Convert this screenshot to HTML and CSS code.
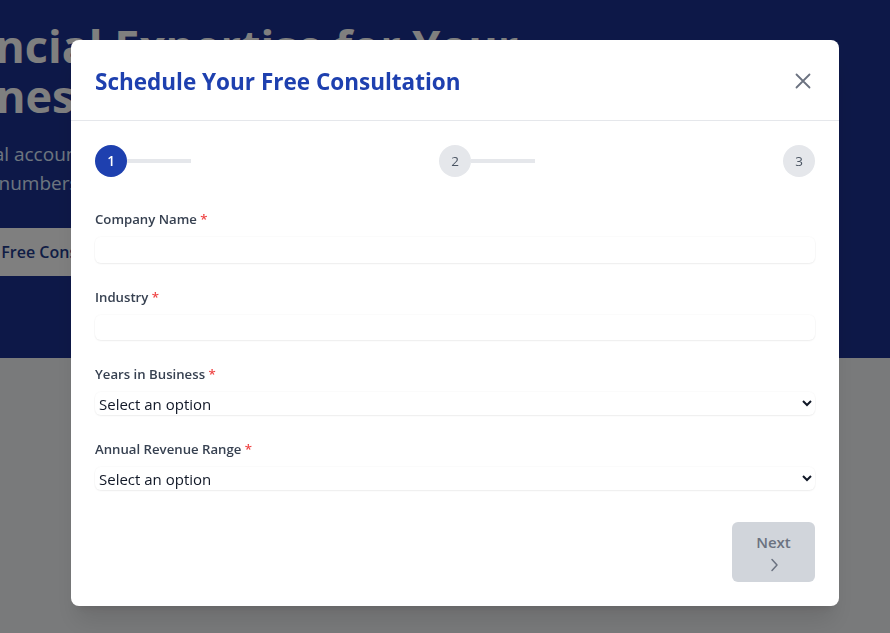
FILE: index.html
```html
<!DOCTYPE html>
<html lang="en">
<head>
<meta charset="utf-8">
<title>Schedule Your Free Consultation</title>
<link rel="stylesheet" href="styles.css">
</head>
<body>
<div class="page">
  <section class="hero">
    <div class="hero-inner">
      <h1 class="hero-title">Financial Expertise for Your<br>Business Success</h1>
      <p class="hero-text">Professional accounting and tax advisory for growing companies.<br>Make your numbers work harder for you.</p>
      <a class="hero-btn" href="#">Get Free Consultation</a>
    </div>
  </section>
  <section class="below"></section>
</div>

<div class="overlay">
  <div class="modal">
    <div class="modal-header">
      <h2 class="modal-title">Schedule Your Free Consultation</h2>
      <button class="close" aria-label="Close">
        <svg width="16" height="16" viewBox="0 0 16 16" fill="none" stroke="#6b7280" stroke-width="1.8" stroke-linecap="round"><path d="M1.5 1.5L14.5 14.5M14.5 1.5L1.5 14.5"/></svg>
      </button>
    </div>
    <div class="modal-body">
      <div class="stepper">
        <div class="step">
          <span class="dot active">1</span>
          <span class="bar"></span>
        </div>
        <div class="step">
          <span class="dot">2</span>
          <span class="bar"></span>
        </div>
        <div class="step">
          <span class="dot">3</span>
        </div>
      </div>

      <form class="form">
        <div class="field">
          <label class="label">Company Name <span class="req">*</span></label>
          <input class="input" type="text">
        </div>
        <div class="field">
          <label class="label">Industry <span class="req">*</span></label>
          <input class="input" type="text">
        </div>
        <div class="field">
          <label class="label">Years in Business <span class="req">*</span></label>
          <select class="select"><option>Select an option</option></select>
        </div>
        <div class="field">
          <label class="label">Annual Revenue Range <span class="req">*</span></label>
          <select class="select"><option>Select an option</option></select>
        </div>
        <div class="actions">
          <button type="button" class="next">
            <span>Next</span>
            <svg width="10" height="14" viewBox="0 0 10 14" fill="none" stroke="#6b7280" stroke-width="1.5" stroke-linecap="round" stroke-linejoin="round"><path d="M3 1.5L8 7L3 12.5"/></svg>
          </button>
        </div>
      </form>
    </div>
  </div>
</div>
</body>
</html>
```

FILE: styles.css
```css
* { box-sizing: border-box; }
html, body { margin: 0; padding: 0; }
body {
  font-family: "Open Sans", "Noto Sans", sans-serif;
  background: #f3f4f6;
  overflow: hidden;
  height: 633px;
}
.page { width: 890px; }
.hero {
  background: #1b3190;
  height: 358px;
  overflow: hidden;
  padding-top: 21px;
}
.hero-inner { margin-left: -100px; }
.hero-title {
  margin: 0;
  color: #ffffff;
  font-size: 45px;
  line-height: 50px;
  font-weight: 700;
  white-space: nowrap;
}
.hero-text {
  margin: 19px 0 0;
  color: #dbeafe;
  font-size: 19px;
  line-height: 29px;
  white-space: nowrap;
}
.hero-btn {
  display: inline-block;
  margin-top: 30px;
  background: #ffffff;
  color: #1e3a8a;
  font-size: 16px;
  font-weight: 600;
  line-height: 48px;
  padding: 0 32px 0 70px;
  text-decoration: none;
}
.below { height: 275px; background: #f3f4f6; }

.overlay {
  position: fixed;
  inset: 0;
  background: rgba(0, 0, 0, 0.5);
  padding: 40px 0 0 71px;
}
.modal {
  width: 768px;
  height: 566px;
  background: #ffffff;
  border-radius: 8px;
  box-shadow: 0 20px 25px -5px rgba(0,0,0,0.1), 0 8px 10px -6px rgba(0,0,0,0.1);
  overflow: hidden;
}
.modal-header {
  display: flex;
  align-items: center;
  justify-content: space-between;
  padding: 24px 24px 23px;
  border-bottom: 1px solid #e5e7eb;
  height: 81px;
}
.modal-title {
  margin: 0;
  color: #1e40af;
  font-size: 22.5px;
  font-weight: 700;
  line-height: 32px;
  padding-top: 2px;
}
.close {
  border: 0;
  background: none;
  padding: 0;
  width: 16px;
  height: 16px;
  margin-right: 4px;
  display: flex;
}
.modal-body { padding: 24px; }

.stepper {
  display: flex;
  justify-content: space-between;
  align-items: center;
  margin-bottom: 32px;
}
.step { display: flex; align-items: center; }
.dot {
  width: 32px;
  height: 32px;
  border-radius: 50%;
  background: #e5e7eb;
  color: #4b5563;
  font-size: 13.5px;
  font-weight: 500;
  display: flex;
  align-items: center;
  justify-content: center;
}
.dot.active { background: #1e40af; color: #ffffff; font-weight: 600; }
.bar {
  width: 64px;
  height: 4px;
  background: #e5e7eb;
}

.form { display: flex; flex-direction: column; gap: 24px; }
.field { display: flex; flex-direction: column; }
.label {
  color: #374151;
  font-size: 13.2px;
  font-weight: 600;
  line-height: 20px;
  margin-bottom: 8px;
}
.req { color: #ef4444; }
.input {
  height: 25.5px;
  border: 0;
  border-radius: 6px;
  background: #ffffff;
  box-shadow: 0 1px 2px 0 rgba(0,0,0,0.06), 0 0 0 1px rgba(0,0,0,0.015);
  font: inherit;
  padding: 1px 4px;
  outline: none;
}
.select {
  height: 23px;
  border: 0;
  border-radius: 6px;
  background: #ffffff;
  box-shadow: 0 1px 2px 0 rgba(0,0,0,0.06), 0 0 0 1px rgba(0,0,0,0.015);
  font-family: inherit;
  font-size: 15px;
  color: #111827;
  padding: 0;
}
.actions {
  display: flex;
  justify-content: flex-end;
  margin-top: 8px;
}
.next {
  width: 83px;
  height: 60px;
  border: 0;
  border-radius: 6px;
  background: #d1d5db;
  color: #6b7280;
  font-family: inherit;
  font-size: 15px;
  font-weight: 600;
  display: flex;
  flex-direction: column;
  align-items: center;
  justify-content: center;
  gap: 6px;
  line-height: 20px;
  padding: 0;
}
```
